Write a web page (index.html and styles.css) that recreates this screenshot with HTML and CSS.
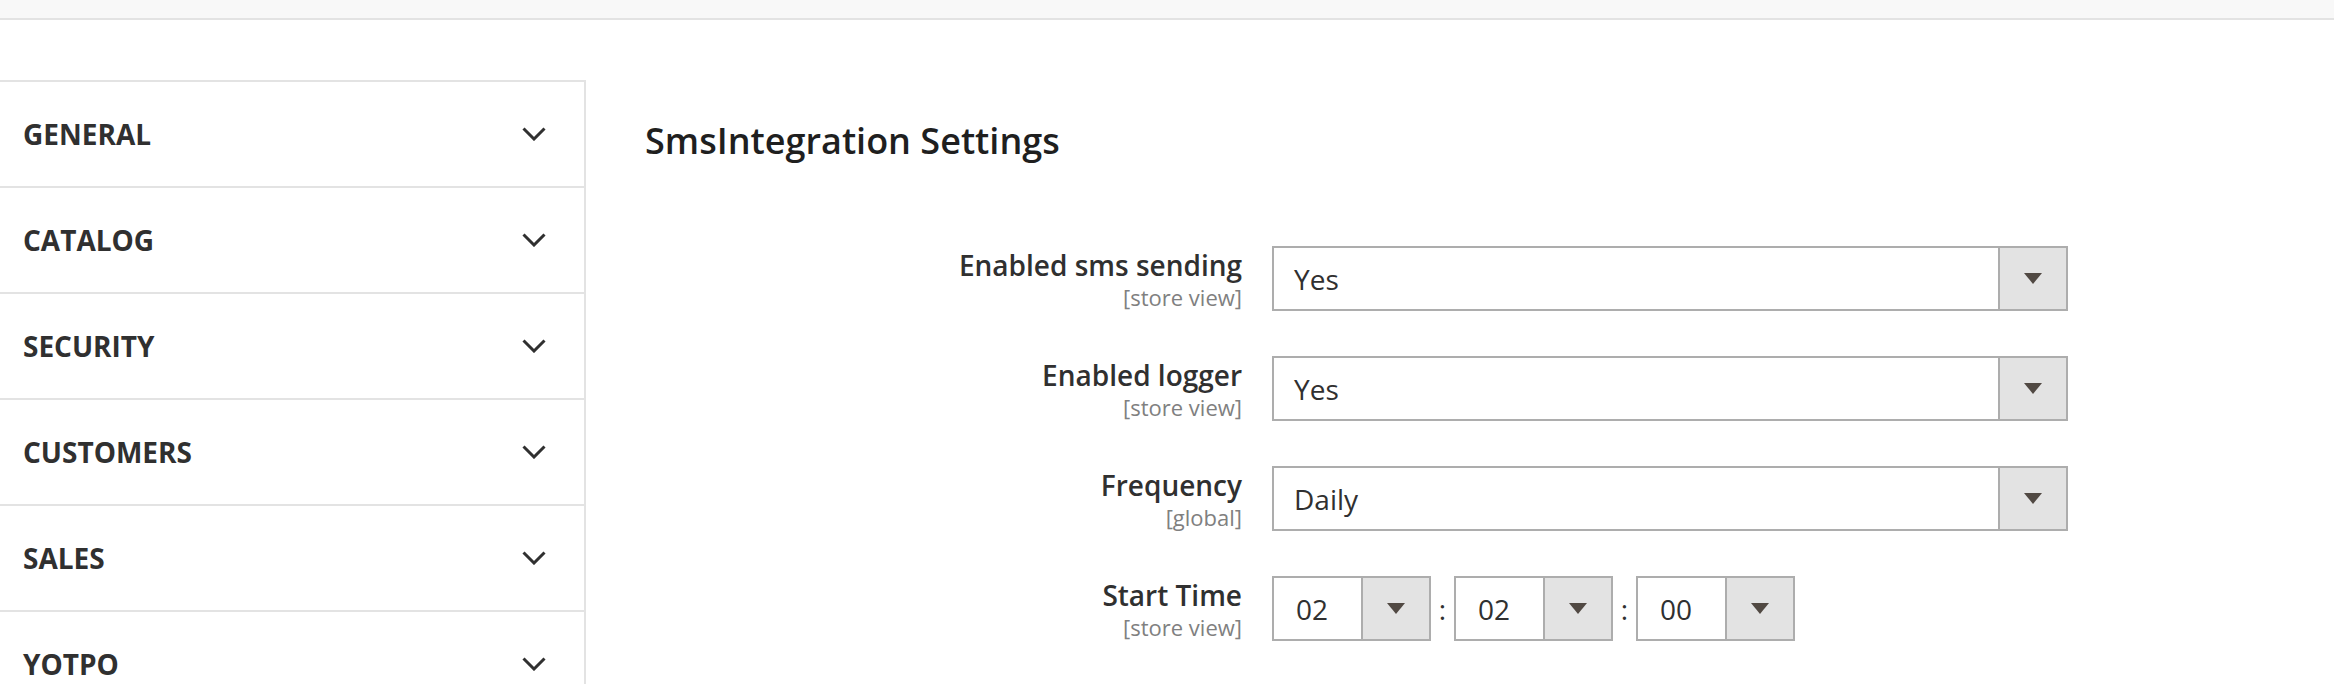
FILE: index.html
```html
<!DOCTYPE html>
<html lang="en">
<head>
<meta charset="utf-8">
<title>SmsIntegration Settings</title>
<link rel="stylesheet" href="styles.css">
</head>
<body>
<div class="page">
  <div class="topbar"></div>
  <div class="main">
    <nav class="sidenav">
      <div class="nav-item"><span class="nav-title">GENERAL</span><svg class="chev" viewBox="0 0 24 14"><polyline points="1.5,1.5 12,12 22.5,1.5"/></svg></div>
      <div class="nav-item"><span class="nav-title">CATALOG</span><svg class="chev" viewBox="0 0 24 14"><polyline points="1.5,1.5 12,12 22.5,1.5"/></svg></div>
      <div class="nav-item"><span class="nav-title">SECURITY</span><svg class="chev" viewBox="0 0 24 14"><polyline points="1.5,1.5 12,12 22.5,1.5"/></svg></div>
      <div class="nav-item"><span class="nav-title">CUSTOMERS</span><svg class="chev" viewBox="0 0 24 14"><polyline points="1.5,1.5 12,12 22.5,1.5"/></svg></div>
      <div class="nav-item"><span class="nav-title">SALES</span><svg class="chev" viewBox="0 0 24 14"><polyline points="1.5,1.5 12,12 22.5,1.5"/></svg></div>
      <div class="nav-item"><span class="nav-title">YOTPO</span><svg class="chev" viewBox="0 0 24 14"><polyline points="1.5,1.5 12,12 22.5,1.5"/></svg></div>
    </nav>
    <section class="content">
      <h2 class="legend">SmsIntegration Settings</h2>
      <div class="fields">
        <div class="field">
          <div class="label"><span class="label-text">Enabled sms sending</span><span class="scope">[store view]</span></div>
          <div class="control">
            <div class="select wide"><span class="value">Yes</span><span class="arrow"><i class="tri"></i></span></div>
          </div>
        </div>
        <div class="field">
          <div class="label"><span class="label-text">Enabled logger</span><span class="scope">[store view]</span></div>
          <div class="control">
            <div class="select wide"><span class="value">Yes</span><span class="arrow"><i class="tri"></i></span></div>
          </div>
        </div>
        <div class="field">
          <div class="label"><span class="label-text">Frequency</span><span class="scope">[global]</span></div>
          <div class="control">
            <div class="select wide"><span class="value">Daily</span><span class="arrow"><i class="tri"></i></span></div>
          </div>
        </div>
        <div class="field">
          <div class="label"><span class="label-text">Start Time</span><span class="scope">[store view]</span></div>
          <div class="control time">
            <div class="select small"><span class="value">02</span><span class="arrow"><i class="tri"></i></span></div>
            <span class="colon">:</span>
            <div class="select small"><span class="value">02</span><span class="arrow"><i class="tri"></i></span></div>
            <span class="colon">:</span>
            <div class="select small"><span class="value">00</span><span class="arrow"><i class="tri"></i></span></div>
          </div>
        </div>
      </div>
    </section>
  </div>
</div>
</body>
</html>
```

FILE: styles.css
```css
* { box-sizing: border-box; }
html, body { margin: 0; padding: 0; background: #fff; }
body {
  font-family: "Open Sans", "Liberation Sans", sans-serif;
  color: #303030;
}
.page { height: 684px; overflow: hidden; }
.topbar {
  height: 20px;
  background: #f8f8f8;
  border-bottom: 2px solid #e3e3e3;
}
.main {
  display: flex;
  align-items: flex-start;
  padding-top: 60px;
}
.sidenav {
  width: 586px;
  flex: 0 0 586px;
  border-top: 2px solid #e3e3e3;
  border-right: 2px solid #e3e3e3;
}
.nav-item {
  height: 106px;
  border-bottom: 2px solid #e3e3e3;
  display: flex;
  align-items: center;
  justify-content: space-between;
  padding: 0 38px 0 23px;
}
.nav-title {
  font-size: 28px;
  font-weight: 700;
  color: #303030;
}
.chev {
  width: 24px;
  height: 14px;
  fill: none;
  stroke: #303030;
  stroke-width: 3;
}
.content {
  flex: 1;
  padding-left: 59px;
}
.legend {
  margin: 0;
  padding-top: 41px;
  font-size: 36px;
  line-height: 40px;
  font-weight: 600;
  color: #1f1f1f;
}
.fields {
  padding-top: 85px;
  display: flex;
  flex-direction: column;
  gap: 45px;
}
.field {
  display: flex;
  gap: 30px;
}
.label {
  width: 597px;
  display: flex;
  flex-direction: column;
  align-items: flex-end;
  padding-top: 4px;
}
.label-text {
  font-size: 28px;
  line-height: 30px;
  font-weight: 600;
  color: #303030;
}
.scope {
  margin-top: 4px;
  font-size: 22px;
  line-height: 26px;
  color: #808080;
}
.control { display: flex; align-items: center; }
.select {
  height: 65px;
  border: 2px solid #adadad;
  background: #fff;
  display: flex;
  align-items: stretch;
}
.select.wide { width: 796px; }
.select.small { width: 159px; }
.value {
  flex: 1;
  display: flex;
  align-items: center;
  padding-left: 20px;
  font-size: 28px;
  color: #303030;
}
.select.small .value { padding-left: 22px; }
.arrow {
  width: 68px;
  flex: 0 0 68px;
  background: #e3e3e3;
  border-left: 2px solid #adadad;
  display: flex;
  align-items: center;
  justify-content: center;
}
.tri {
  display: block;
  width: 0;
  height: 0;
  border-left: 9px solid transparent;
  border-right: 9px solid transparent;
  border-top: 11px solid #514943;
}
.time { gap: 0; }
.colon {
  width: 23px;
  text-align: center;
  font-size: 28px;
  color: #303030;
}
```
